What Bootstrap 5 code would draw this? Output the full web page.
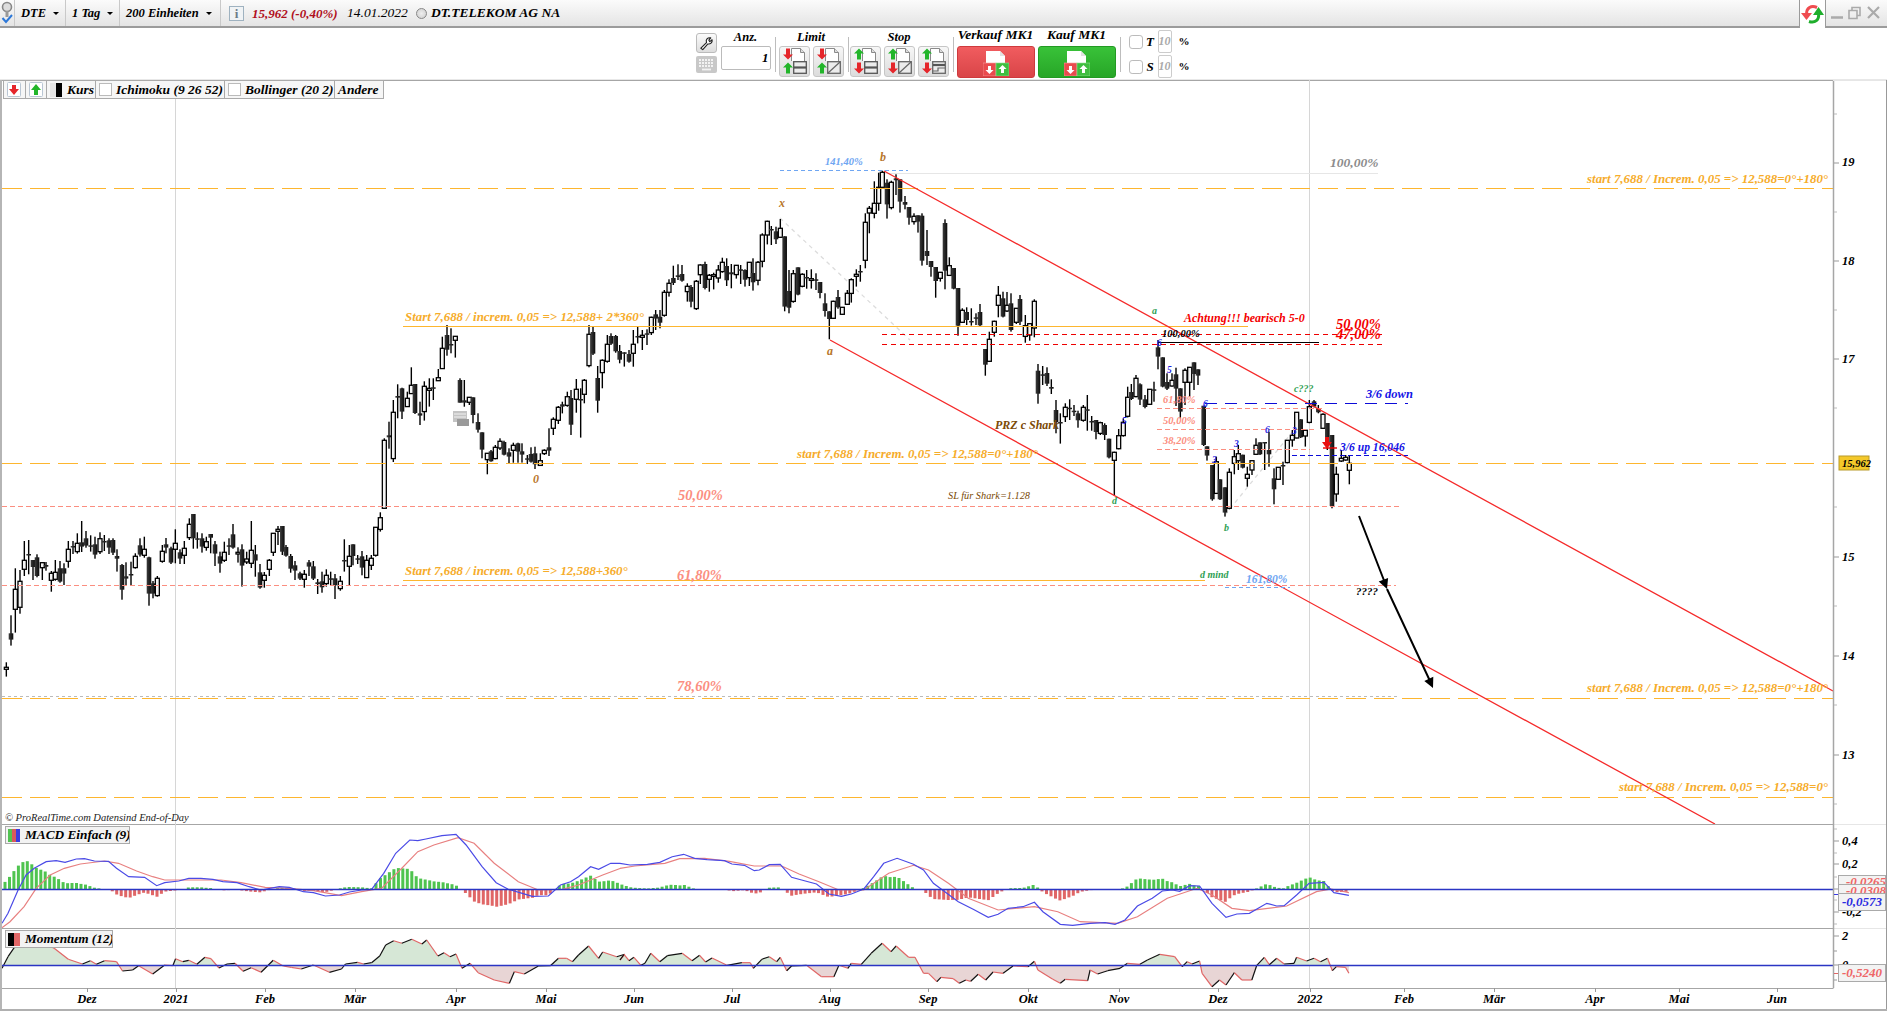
<!DOCTYPE html>
<html lang="de">
<head>
<meta charset="utf-8">
<title>DTE Chart</title>
<link href="https://cdn.jsdelivr.net/npm/bootstrap@5.3.0/dist/css/bootstrap.min.css" rel="stylesheet">
<style>
html,body{height:1011px;overflow:hidden;background:#fff;margin:0}
body,.cur{font-family:"Liberation Serif",serif;font-style:italic;font-weight:700;color:#000;font-size:12.5px;line-height:1}
.top-strip{height:28px;background:linear-gradient(#fbfbfb,#e4e4e4);border-bottom:2px solid #9b9b9b}
.tb-cell{height:26px;border:0;border-right:1px solid #c9c9c9;border-radius:0;padding:0 0 0 6px;font:inherit;color:#000;background:none;text-align:left;white-space:nowrap}
.tb-pin{width:15px;padding:0;display:flex;align-items:center;justify-content:center}
.w-dte{width:51px}.w-day{width:54px}.w-unit{width:101px}
.tb-cell.dropdown-toggle::after{margin-left:7px;vertical-align:.12em;border-top-width:.3em;border-right-width:.28em;border-left-width:.28em}
.info-box{width:15px;height:15px;border:1px solid #9fb2c0;background:#f0f3f5;color:#6c7c88;margin:0 8px;font-size:13px;font-style:normal;text-align:center}
.quote-red{color:#b00f1c;width:95px;font-size:13px}
.quote-date{width:69px;font-size:13.5px;font-weight:400}
.quote-dot{width:11px;height:11px;border-radius:50%;border:1px solid #888;background:radial-gradient(#eee,#ccc)}
.quote-name{font-size:13.5px}
.sync-tab{width:27px;height:28px;background:#fff;border-left:1px solid #9b9b9b;border-right:1px solid #9b9b9b;margin-bottom:-2px;z-index:2}
.win-btns{width:61px;padding-right:6px}
.order-strip{height:52px;padding-right:2px;background:#fff;border-bottom:1px solid #e8e8e8}
.ob-col{display:flex;flex-direction:column;align-items:center}
.ob-label{height:18px;line-height:18px;white-space:nowrap;font-size:12.5px}
.ob-label-mk{font-size:13.5px;line-height:14px}
.ob-sep{width:1px;height:35px;background:#bdbdbd;margin:9px 3px 0 4px}
.ob-sep-tight{margin-right:1px}
.ob-tools{width:21px;margin-right:4px;padding-top:5px;gap:3px}
.tool-btn{width:21px;height:20px;padding:0;border:1px solid #bbb;border-radius:3px;background:linear-gradient(#fbfbfb,#ddd);display:flex;align-items:center;justify-content:center}
.ob-anz{width:50px}
.anz-input{width:50px;height:24px;padding:0 1px 0 0;font:inherit;font-size:13px;text-align:right;border:1px solid #bbb;border-radius:2px;color:#000}
.icon-btn{width:31px;height:31px;padding:0;border:1px solid #c6c6c6;border-radius:3px;background:linear-gradient(#f7f7f7,#dcdcdc);display:flex;align-items:center;justify-content:center}
.mk-btn{width:78px;height:32px;padding:0;border-radius:3px;display:flex;align-items:flex-start;justify-content:center;padding-top:3px}
.mk-sell{background:linear-gradient(#f15c5f,#d94548);border:1px solid #cf3a3d}
.mk-buy{background:linear-gradient(#39c239,#27a627);border:1px solid #239a23}
.ts-wrap{padding:2px 0 0 5px;gap:2px}
.ts-box{width:14px;height:14px;margin:0;border:1px solid #bbb;border-radius:2px}
.ts-input{width:14px;height:23px;padding:0;font:inherit;font-size:12px;color:#aaa;text-align:center;border:1px solid #ccc;border-radius:2px;background:#fff}
.ts-letter{width:15px;text-align:center;font-size:13px}
.ts-pct{font-size:11px;margin-left:7px;font-style:normal}
.chart-frame{border-left:2px solid #b5b5b5;border-right:1px solid #999}
.plot-pane{position:relative}
.plot-pane svg{display:block}
.legend-bar{position:absolute;left:1px;top:0;height:19px;display:flex;background:#f6f6f6;border:1px solid #aaa}
.legend-cell{display:flex;align-items:center;border-right:1px solid #aaa;overflow:hidden;white-space:nowrap;font-size:13.5px;padding-left:3px}
.legend-cell:last-child{border-right:0}
.lc-1{width:22px}.lc-2{width:21px}.lc-3{width:49px}.lc-4{width:129px}.lc-5{width:110px}.lc-6{width:48px}
.lg-swatch{width:13px;height:13px;border:1px solid #bbb;margin-right:4px;flex:none;background:#fff}
.lg-kurs{width:12px;height:14px;background:linear-gradient(90deg,#e6e6e6 0 50%,#000 50%);margin-right:5px;flex:none}
.ind-legend{position:absolute;left:3px;height:18px;background:#f3f3f3;border:1px solid #aaa;display:flex;align-items:center;padding-left:2px;font-size:13.3px;white-space:nowrap;overflow:hidden}
.il-macd{top:2px;width:125px}
.il-mom{top:2px;width:108px}
.macd-swatch{width:12px;height:13px;margin-right:5px;background:linear-gradient(90deg,#52c252 0 33%,#d9595d 33% 66%,#3b3be0 66%);flex:none}
.mom-swatch{width:12px;height:13px;margin-right:5px;background:linear-gradient(90deg,#000 0 50%,#e06666 50%);flex:none}
.bottom-edge{height:2px;background:#b0b0b0}
svg text{font-family:"Liberation Serif",serif;font-style:italic;font-weight:700}
.t-or{fill:#f6ac2b;font-size:12.9px}
.t-fib{fill:#fb8e80;font-size:14.5px}
.t-red{fill:#f40000;font-size:14.5px}
.t-fs{fill:#fb8e80;font-size:10.5px}
.t-bl{fill:#6fa6f2;font-size:10.5px}
.t-bd{fill:#1414e6;font-size:12.5px}
.t-br{fill:#7b4a06;font-size:12px}
.t-gn{fill:#2f9f54;font-size:10px}
.t-mk{fill:#1c1ce0;font-size:9.5px}
.t-ax{fill:#000;font-size:12.5px}
.t-gy{fill:#8c8c8c;font-size:13.5px}
.t-up{font-size:11.6px}
.t-sl{font-size:10.3px;font-weight:400}
.t-wide{font-size:11.5px}
.t-hund{font-size:10.5px}
.t-ach{font-size:12px}
.t-q{font-size:11px}
.t-copy{font-size:10.5px;font-weight:400;fill:#222}
</style>
</head>
<body>
<svg width="0" height="0" class="position-absolute">
  <defs>
    <linearGradient id="cg" x1="0" x2="1" y1="0" y2="0"><stop offset="0" stop-color="#3c3c3c"/><stop offset="1" stop-color="#0c0c0c"/></linearGradient>
    <symbol id="adn" viewBox="0 0 10 11"><path d="M3 0h4v6h3L5 11 0 6h3z" fill="#e5262b"/></symbol>
    <symbol id="aup" viewBox="0 0 10 11"><path d="M5 0l5 5H7v6H3V5H0z" fill="#22b52a"/></symbol>
    <symbol id="doc" viewBox="0 0 14 14"><path d="M.5 13V.5h9l4 4V13" fill="#fff" stroke="#8a8a8a"/><path d="M9.5.5v4h4" fill="#ddd" stroke="#8a8a8a"/></symbol>
    <symbol id="bx1" viewBox="0 0 14 13"><rect x=".7" y=".7" width="12.6" height="11.6" fill="#ececec" stroke="#555" stroke-width="1.3"/><path d="M1 6.5h12" stroke="#555" stroke-width="2.2"/></symbol>
    <symbol id="bx2" viewBox="0 0 14 13"><rect x=".7" y=".7" width="12.6" height="11.6" fill="#ececec" stroke="#666" stroke-width="1.3"/><path d="M1 12L13 1" stroke="#666" stroke-width="1.2"/></symbol>
    <symbol id="bx3" viewBox="0 0 14 13"><rect x=".7" y=".7" width="12.6" height="11.6" fill="#ececec" stroke="#666" stroke-width="1.3"/><path d="M1 4h12" stroke="#555" stroke-width="2.2"/><path d="M1 10h5V7h7" fill="none" stroke="#666" stroke-width="1.2"/></symbol>
    <symbol id="mk" viewBox="0 0 26 26"><path d="M3 14V1h14l5 5v8" fill="#fff"/><path d="M17 1v5h5" fill="#e2e2e2"/><rect y="13" width="13" height="13" fill="#ea4a4e" stroke="#f6a0a0" stroke-width=".6"/><rect x="13" y="13" width="13" height="13" fill="#3fbe3f" stroke="#8fe08f" stroke-width=".6"/><path d="M5 16h3v4h2.500l-4 4-4-4H5z" fill="#fff"/><path d="M19.500 15l4 4H21v4h-3v-4h-2.500z" fill="#fff"/></symbol>
  </defs>
</svg>

<header class="top-strip d-flex align-items-start">
  <div class="tb-cell tb-pin">
    <svg width="13" height="24" viewBox="0 0 13 24"><circle cx="6" cy="6" r="4.500" fill="#ddd" stroke="#888" stroke-width="1.600"/><path d="M6 10v6" stroke="#999" stroke-width="3"/><path d="M1.500 17l3.500 4 6-7" fill="none" stroke="#2d78d8" stroke-width="2"/></svg>
  </div>
  <button class="tb-cell w-dte dropdown-toggle" type="button">DTE</button>
  <button class="tb-cell w-day dropdown-toggle" type="button">1 Tag</button>
  <button class="tb-cell w-unit dropdown-toggle" type="button">200 Einheiten</button>
  <div class="d-flex align-items-center flex-grow-1" style="height:26px">
    <span class="info-box">i</span>
    <span class="quote-red">15,962 (-0,40%)</span>
    <span class="quote-date">14.01.2022</span>
    <span class="quote-dot"></span>
    <span class="quote-name ms-1">DT.TELEKOM AG NA</span>
  </div>
  <div class="sync-tab d-flex align-items-center justify-content-center">
    <svg width="23" height="21" viewBox="0 0 23 21"><path d="M16 3.500C10 1 5.500 4 5.500 10" fill="none" stroke="#ef4c50" stroke-width="3"/><path d="M0 9h11l-5.500 7z" fill="#ef4c50"/><path d="M8 17.500c6 2 10.500-1.500 9.500-8" fill="none" stroke="#1fae2c" stroke-width="3"/><path d="M12 11h11l-5.500-8z" fill="#1fae2c"/></svg>
  </div>
  <div class="win-btns d-flex align-items-center justify-content-end" style="height:26px">
    <svg width="50" height="14" viewBox="0 0 50 14"><path d="M0 11.500h12" stroke="#aaa" stroke-width="2.500"/><path d="M18 4.500h8v8h-8zM21 4.500v-3h8v8h-3" fill="none" stroke="#aaa" stroke-width="1.600"/><path d="M37 1l11 11M48 1L37 12" stroke="#aaa" stroke-width="2.200"/></svg>
  </div>
</header>

<section class="order-strip d-flex justify-content-center align-items-start">
  <div class="ob-col ob-tools">
    <button class="tool-btn" type="button" aria-label="Werkzeug"><svg width="15" height="15" viewBox="0 0 16 16"><path d="M2 13L8 7C7 4 9 1.500 12.500 2L10.500 4.500 11.500 6 14 4C14.500 7 12 9 9.500 8.500L4 14.500Z" fill="#fff" stroke="#222" stroke-width="1.200" stroke-linejoin="round"/></svg></button>
    <svg width="21" height="17" viewBox="0 0 21 17"><rect width="21" height="17" rx="2" fill="#c8c8c8"/><path d="M3 4h15M3 7h15M3 10h15" stroke="#f2f2f2" stroke-width="1.800" stroke-dasharray="2 1"/><path d="M6 13.500h9" stroke="#f2f2f2" stroke-width="1.800"/></svg>
  </div>
  <div class="ob-col ob-anz"><span class="ob-label">Anz.</span><input class="form-control anz-input" value="1" aria-label="Anzahl"></div>
  <span class="ob-sep"></span>
  <div class="ob-col"><span class="ob-label">Limit</span>
    <div class="d-flex" style="gap:3px">
      <button class="icon-btn" type="button" aria-label="Limit 1"><svg width="28" height="27" viewBox="0 0 28 27"><use href="#doc" x="11" y="0" width="14" height="14"/><use href="#adn" x="3" y="0" width="10" height="12"/><use href="#aup" x="3" y="14" width="10" height="12"/><use href="#bx1" x="13" y="13" width="14" height="13"/></svg></button>
      <button class="icon-btn" type="button" aria-label="Limit 2"><svg width="28" height="27" viewBox="0 0 28 27"><use href="#doc" x="11" y="0" width="14" height="14"/><use href="#adn" x="3" y="0" width="10" height="12"/><use href="#aup" x="3" y="14" width="10" height="12"/><use href="#bx2" x="13" y="13" width="14" height="13"/></svg></button>
    </div>
  </div>
  <span class="ob-sep ob-sep-tight"></span>
  <div class="ob-col"><span class="ob-label">Stop</span>
    <div class="d-flex" style="gap:3px">
      <button class="icon-btn" type="button" aria-label="Stop 1"><svg width="28" height="27" viewBox="0 0 28 27"><use href="#doc" x="11" y="0" width="14" height="14"/><use href="#aup" x="3" y="0" width="10" height="12"/><use href="#adn" x="3" y="14" width="10" height="12"/><use href="#bx1" x="13" y="13" width="14" height="13"/></svg></button>
      <button class="icon-btn" type="button" aria-label="Stop 2"><svg width="28" height="27" viewBox="0 0 28 27"><use href="#doc" x="11" y="0" width="14" height="14"/><use href="#aup" x="3" y="0" width="10" height="12"/><use href="#adn" x="3" y="14" width="10" height="12"/><use href="#bx2" x="13" y="13" width="14" height="13"/></svg></button>
      <button class="icon-btn" type="button" aria-label="Stop 3"><svg width="28" height="27" viewBox="0 0 28 27"><use href="#doc" x="11" y="0" width="14" height="14"/><use href="#aup" x="3" y="0" width="10" height="12"/><use href="#adn" x="3" y="14" width="10" height="12"/><use href="#bx3" x="13" y="13" width="14" height="13"/></svg></button>
    </div>
  </div>
  <span class="ob-sep"></span>
  <div class="d-flex" style="gap:3px">
    <div class="ob-col"><span class="ob-label ob-label-mk">Verkauf MK1</span><button class="mk-btn mk-sell" type="button" aria-label="Verkauf"><svg width="26" height="26"><use href="#mk" width="26" height="26"/></svg></button></div>
    <div class="ob-col"><span class="ob-label ob-label-mk">Kauf MK1</span><button class="mk-btn mk-buy" type="button" aria-label="Kauf"><svg width="26" height="26"><use href="#mk" width="26" height="26"/></svg></button></div>
  </div>
  <span class="ob-sep"></span>
  <div class="d-flex flex-column ts-wrap">
    <div class="d-flex align-items-center"><input class="form-check-input ts-box" type="checkbox" aria-label="T"><span class="ts-letter">T</span><input class="ts-input" value="10" aria-label="T Prozent"><span class="ts-pct">%</span></div>
    <div class="d-flex align-items-center"><input class="form-check-input ts-box" type="checkbox" aria-label="S"><span class="ts-letter">S</span><input class="ts-input" value="10" aria-label="S Prozent"><span class="ts-pct">%</span></div>
  </div>
</section>

<main class="chart-frame">
  <div class="plot-pane">
    <svg id="pricePane" width="1884" height="744" viewBox="2 80 1884 744">
      <path d="M2 80.500H1833" stroke="#a6a6a6"/>
      <path d="M175.500 80V824M1309.500 80V824" stroke="#d6d6d6"/>
      <path d="M780 218L910 340M1225 515L1302 420" stroke="#dcdcdc" stroke-width="1.300" stroke-dasharray="4 4" fill="none"/>
      <g id="candles"></g>
      <path d="M2 188.500H1833M2 463.500H1833M2 698.500H1833M2 797.500H1833" stroke="#fdb62f" stroke-width="1" stroke-dasharray="20 8" fill="none"/>
      <path d="M403 326.500H1248M403 580.500H1205" stroke="#fdb62f" stroke-width="1" fill="none"/>
      <path d="M885 173.500H1378" stroke="#e6e6e6"/>
      <path d="M2 506.500H1400M2 585.500H1396" stroke="#fb8e80" stroke-width="1" stroke-dasharray="5 3" fill="none"/>
      <path d="M2 696.500H1400" stroke="#bbb" stroke-width="1" stroke-dasharray="3 3" fill="none"/>
      <path d="M1157 408.500H1325M1157 429.500H1315M1157 449.500H1310" stroke="#fb8e80" stroke-width="1" stroke-dasharray="5 3" fill="none"/>
      <path d="M884 171L1833 691M830 340L1715 824" stroke="#f52a2a" stroke-width="1.300" fill="none"/>
      <path d="M882 334.500H1382M882 344.500H1382" stroke="#ee0000" stroke-width="1" stroke-dasharray="5 4" fill="none"/>
      <path d="M1158 342.500H1319" stroke="#000" stroke-width="1"/>
      <path d="M1205 403.500H1408" stroke="#0c0cd8" stroke-width="1" stroke-dasharray="12 8" fill="none"/>
      <path d="M1292 455.500H1408" stroke="#0c0cd8" stroke-width="1" stroke-dasharray="5 3" fill="none"/>
      <path d="M780 170.500H908M1225 587.500H1290" stroke="#6fa6f2" stroke-width="1" stroke-dasharray="4 3" fill="none"/>
      <path d="M1323 448H1337" stroke="#ee0000" stroke-width="1.400"/>
      <path d="M1325 437h4v5h3l-5 7-5-7h3z" fill="#e81010"/>
      <path d="M1359 516L1385 583M1387 589L1430 681" stroke="#000" stroke-width="2" fill="none"/>
      <path d="M1387 589L1388.100 577.900 1378.700 581.500ZM1433 688L1433.300 676.800 1424.300 681Z" fill="#000"/>
      <g fill="#c4c4c4"><rect x="453" y="411" width="14" height="11"/><rect x="457" y="419" width="12" height="7" fill="#9a9a9a"/></g>
      <path d="M454 414h12M454 417h12" stroke="#f2f2f2"/>
      <text class="t-or" text-anchor="end" x="1828" y="183">start 7,688 / Increm. 0,05 =&gt; 12,588=0°+180°</text>
      <text class="t-or" text-anchor="end" x="1828" y="692">start 7,688 / Increm. 0,05 =&gt; 12,588=0°+180°</text>
      <text class="t-or" text-anchor="end" x="1828" y="791">start 7,688 / Increm. 0,05 =&gt; 12,588=0°</text>
      <text class="t-or" x="797" y="458">start 7,688 / Increm. 0,05 =&gt; 12,588=0°+180°</text>
      <text class="t-or" x="405" y="321">Start 7,688 / increm. 0,05 =&gt; 12,588+ 2*360°</text>
      <text class="t-or" x="405" y="575">Start 7,688 / increm. 0,05 =&gt; 12,588+360°</text>
      <text class="t-fib" x="678" y="500">50,00%</text>
      <text class="t-fib" x="677" y="580">61,80%</text>
      <text class="t-fib" x="677" y="691">78,60%</text>
      <text class="t-gy" x="1330" y="167">100,00%</text>
      <text class="t-bl" x="825" y="165">141,40%</text>
      <text class="t-br" x="880" y="161" style="fill:#b8762a">b</text>
      <text class="t-br" x="779" y="207" style="fill:#b8762a">x</text>
      <text class="t-br" x="827" y="355" style="fill:#b8762a">a</text>
      <text class="t-br" x="533" y="483" style="fill:#b8762a">0</text>
      <text class="t-gn" x="1152" y="314">a</text>
      <text class="t-gn" x="1112" y="504">d</text>
      <text class="t-gn" x="1224" y="531">b</text>
      <text class="t-gn" x="1294" y="392">c???</text>
      <text class="t-gn" x="1200" y="578">d mind</text>
      <text class="t-red t-ach" x="1184" y="322">Achtung!!! bearisch 5-0</text>
      <text class="t-red" x="1336" y="329">50,00%</text>
      <text class="t-red" x="1336" y="339">47,00%</text>
      <text class="t-hund" x="1162" y="337">100,00%</text>
      <text class="t-fs" x="1163" y="403">61,80%</text>
      <text class="t-fs" x="1163" y="424">50,00%</text>
      <text class="t-fs" x="1163" y="444">38,20%</text>
      <text class="t-bd" x="1366" y="398">3/6 down</text>
      <text class="t-bd t-up" x="1340" y="451">3/6 up 16,046</text>
      <text class="t-bl t-wide" x="1246" y="583">161,80%</text>
      <text class="t-q" x="1356" y="595">????</text>
      <text class="t-br" x="995" y="429">PRZ c Shark</text>
      <text class="t-br t-sl" x="948" y="499">SL für Shark=1.128</text>
      <g class="marks">
        <text class="t-mk" x="1157" y="346">6</text><text class="t-mk" x="1167" y="373">5</text><text class="t-mk" x="1203" y="407">6</text><text class="t-mk" x="1212" y="463">3</text><text class="t-mk" x="1122" y="424">5</text><text class="t-mk" x="1234" y="447">3</text><text class="t-mk" x="1265" y="433">6</text><text class="t-mk" x="1292" y="434">3</text>
      </g>
      <text class="t-copy" x="5" y="821">© ProRealTime.com  Datensind End-of-Day</text>
      <path d="M1833.500 80V824" stroke="#a6a6a6" stroke-width="1.500"/>
      <path d="M1833 80.500H1886" stroke="#e6e6e6"/>
      <path d="M1834 163h5M1834 261h5M1834 359h5M1834 557h5M1834 656h5M1834 755h5" stroke="#999"/>
      <path d="M1834 212h3M1834 310h3M1834 408h3M1834 507h3M1834 606h3M1834 705h3M1834 804h3M1834 114h3" stroke="#bbb"/>
      <text class="t-ax" x="1842" y="166">19</text><text class="t-ax" x="1842" y="265">18</text><text class="t-ax" x="1842" y="363">17</text>
      <text class="t-ax" x="1842" y="561">15</text><text class="t-ax" x="1842" y="660">14</text><text class="t-ax" x="1842" y="759">13</text>
      <rect x="1839" y="456" width="30" height="14" fill="#f4c82a" stroke="#b89a2a"/>
      <text class="t-hund" x="1842" y="467">15,962</text>
    </svg>
    <div class="legend-bar">
      <div class="legend-cell lc-1"><svg width="14" height="15" viewBox="0 0 14 15"><rect x=".5" y=".5" width="13" height="14" rx="1" fill="#fff" stroke="#b9c6d4"/><path d="M5 3h4v4h3l-5 6-5-6h3z" fill="#e5262b"/></svg></div>
      <div class="legend-cell lc-2"><svg width="14" height="15" viewBox="0 0 14 15"><rect x=".5" y=".5" width="13" height="14" rx="1" fill="#fff" stroke="#b9c6d4"/><path d="M7 2l5 6H9v5H5V8H2z" fill="#22b52a"/></svg></div>
      <div class="legend-cell lc-3"><span class="lg-kurs"></span>Kurs</div>
      <div class="legend-cell lc-4"><span class="lg-swatch"></span>Ichimoku (9 26 52)</div>
      <div class="legend-cell lc-5"><span class="lg-swatch"></span>Bollinger (20 2)</div>
      <div class="legend-cell lc-6">Andere</div>
    </div>
  </div>
  <div class="plot-pane">
    <svg id="macdPane" width="1884" height="104" viewBox="2 824 1884 104">
      <path d="M2 824.500H1833" stroke="#a6a6a6" stroke-width="1.200"/><path d="M1833 824.500H1886" stroke="#e6e6e6"/>
      <path d="M175.500 824V928M1309.500 824V928" stroke="#d6d6d6"/>
      <g id="macdPlot"></g>
      <path d="M2 889.500H1833" stroke="#2b35c4" stroke-width="1.300"/>
      <path d="M1833.500 824V928" stroke="#a6a6a6" stroke-width="1.500"/>
      <path d="M1834 841h5M1834 864h5M1834 889h5M1834 912h5" stroke="#999"/><path d="M1834 829h3M1834 853h3M1834 877h3M1834 900h3M1834 924h3" stroke="#bbb"/>
      <text class="t-ax" x="1842" y="845">0,4</text><text class="t-ax" x="1842" y="868">0,2</text><text class="t-ax" x="1842" y="916">-0,2</text>
      <rect x="1838.500" y="875.500" width="47" height="13" fill="#f3f3f3" stroke="#aaa"/><text x="1846" y="886" style="font-size:13px;fill:#e66">-0,0265</text>
      <rect x="1838.500" y="884.500" width="47" height="13" fill="#f3f3f3" stroke="#aaa"/><text x="1846" y="895" style="font-size:13px;fill:#e66">-0,0308</text>
      <path d="M1834 894.500h4" stroke="#3a3ae0"/>
      <rect x="1838.500" y="893.500" width="47" height="17" fill="#f3f3f3" stroke="#aaa"/><text x="1842" y="906" style="font-size:13px;fill:#2c2ce0">-0,0573</text>
    </svg>
    <div class="ind-legend il-macd"><span class="macd-swatch"></span>MACD Einfach (9)</div>
  </div>
  <div class="plot-pane">
    <svg id="momPane" width="1884" height="60" viewBox="2 928 1884 60">
      <path d="M2 928.500H1833" stroke="#a6a6a6" stroke-width="1.200"/><path d="M1833 928.500H1886" stroke="#e6e6e6"/>
      <path d="M175.500 928V988M1309.500 928V988" stroke="#d6d6d6"/>
      <g id="momPlot"></g>
      <path d="M2 965.500H1833" stroke="#2b35c4" stroke-width="1.300"/>
      <path d="M1833.500 928V988" stroke="#a6a6a6" stroke-width="1.500"/>
      <path d="M1834 936h5M1834 965h5M1834 951h3M1834 980h3" stroke="#999"/><path d="M1834 973.500h4" stroke="#e06666"/>
      <text class="t-ax" x="1842" y="940">2</text><text class="t-ax" x="1842" y="969">0</text>
      <rect x="1838.500" y="964.500" width="47" height="17" fill="#f3f3f3" stroke="#aaa"/><text x="1842" y="977" style="font-size:13px;fill:#e66">-0,5240</text>
    </svg>
    <div class="ind-legend il-mom"><span class="mom-swatch"></span>Momentum (12)</div>
  </div>
  <svg id="timeAxis" class="d-block" width="1884" height="21" viewBox="2 988 1884 21">
    <path d="M2 988.500H1833.500" stroke="#a6a6a6" stroke-width="1.200"/>
    <g id="timeLabels"></g>
  </svg>
</main>
<div class="bottom-edge"></div>

<script>
(function(){
var NS='http://www.w3.org/2000/svg';
function el(parent,tag,attrs,txt){var e=document.createElementNS(NS,tag);for(var k in attrs)e.setAttribute(k,attrs[k]);if(txt!=null)e.textContent=txt;parent.appendChild(e);return e;}

var segs=[
{x:0,y:490,d:"19 w 532 538 517 560|33 b 430 449 376 467|46 w 298 358 235 428|60 w 274 352 240 371|73 w 211 238 153 258|86 b 192 195 150 253|99 b 210 231 210 270|111 b 202 258 193 262|127 w 218 233 218 270|138 b 225 230 216 242|154 w 250 271 243 305|166 w 247 268 210 272|180 b 235 275 213 278|192 b 235 251 220 285|205 w 178 214 153 233|219 b 168 171 153 192|232 w 160 185 130 191|245 b 157 170 93 186|258 b 145 167 123 173|272 b 166 170 136 185|285 b 163 194 140 206|300 w 146 185 127 192|313 b 153 155 135 183|327 b 151 173 145 192|339 b 150 188 145 195|351 b 198 206 178 245|366 b 225 299 222 329|378 b 259 266 217 288|393 b 252 254 215 286|406 w 199 233 190 236|420 b 166 194 145 200|433 w 178 196 140 203|447 b 202 311 200 347|459 b 280 311 273 325|472 w 265 317 258 320|487 w 184 214 165 218|498 b 163 173 144 190|513 b 175 218 170 222|526 w 160 178 118 220|540 b 187 206 178 222|553 w 175 196 153 222|568 w 103 143 85 150|580 b 72 145 72 176|592 b 145 149 127 176|606 b 145 170 130 188|619 w 155 172 140 182|632 b 132 143 132 190|645 b 163 191 153 228|660 b 199 221 185 248|673 w 187 211 155 216|687 b 166 170 145 195|699 b 133 173 102 176|714 w 187 192 172 218|726 b 178 227 163 290|740 w 207 216 185 222|754 w 181 220 93 234|766 b 193 212 165 260|780 b 247 293 222 296|793 w 256 271 246 293|808 w 211 238 207 258|820 w 130 187 130 198|834 w 118 124 108 165|847 b 108 185 108 195|858 b 171 197 165 200|872 b 198 236 192 248|885 b 226 242 213 270|900 b 250 266 245 270|913 w 253 268 240 293|927 b 217 230 210 258|940 b 229 266 213 270|953 b 277 282 267 312|966 b 274 292 245 308|979 w 256 281 238 290|992 b 265 268 245 285|1005 b 265 286 252 327|1021 w 274 296 258 302|1033 b 210 213 148 245|1048 w 199 229 165 285|1059 b 163 198 163 226|1073 b 205 209 195 222|1086 b 199 233 183 256|1100 w 211 263 195 263|1114 w 205 226 195 240|1127 w 112 196 112 200|1141 w 83 118 67 125"},
{x:380,y:290,d:"13 w 451 655 445 655|27 b 436 442 395 476|40 w 367 506 330 516|53 b 318 323 283 385|66 b 295 365 293 387|82 w 325 350 305 350|94 w 286 311 232 311|105 b 282 369 282 372|120 b 370 377 335 405|133 w 289 365 274 392|148 w 295 301 265 350|160 b 292 294 265 330|175 w 263 272 237 272|187 w 175 236 140 237|201 b 135 179 105 197|213 b 162 164 115 190|226 w 139 151 139 203|240 b 270 338 265 338|253 b 331 338 270 350|268 w 322 337 322 345|279 b 322 375 322 400|294 b 396 419 370 428|306 b 427 479 427 505|322 w 490 509 490 553|333 b 484 514 480 515|346 w 472 506 465 508|360 w 454 474 445 480|372 b 456 494 452 496|387 b 487 500 475 520|400 w 466 481 458 518|414 b 460 485 458 518|426 b 484 494 460 518|442 b 505 509 495 522|453 b 492 515 472 518|465 b 490 523 470 537|481 w 512 526 490 526|493 w 481 491 478 495|507 b 472 482 415 498|520 w 388 415 382 435|535 w 352 391 348 402|547 b 343 350 335 370|562 w 320 346 305 350|573 b 324 404 300 435|589 w 298 328 267 368|602 b 327 329 295 443|613 w 271 313 267 340|627 w 133 227 105 232|639 b 126 191 110 195|653 b 264 332 228 368|667 w 211 248 208 295|682 w 163 214 135 218|693 b 138 161 130 165|707 b 138 184 135 188|719 b 183 209 165 220|733 b 187 189 187 230|747 b 192 215 180 218|760 w 163 190 120 230|773 b 138 141 110 160|787 w 136 142 120 180|801 b 130 133 118 165|814 w 82 128 80 135|827 b 73 86 60 120|840 b 80 98 60 115|853 w 7 76 0 80"},
{x:560,y:200,d:"327 w 250 277 238 290|340 b 234 249 197 255|354 b 226 231 193 240|366 b 222 242 195 245|382 w 259 275 250 305|393 b 261 305 255 322|409 w 244 326 240 330|421 w 195 224 193 252|435 b 192 264 185 268|448 w 226 238 222 275|461 w 224 229 218 268|475 w 210 234 195 248|487 w 187 215 173 218|500 b 198 241 175 258|514 b 217 223 192 265|529 w 196 224 196 236|542 b 208 210 195 252|555 b 210 239 208 260|568 w 187 233 187 258|579 b 219 247 175 272|594 w 187 241 183 256"},
{x:750,y:150,d:"37 w 255 334 250 352|52 w 214 255 212 283|64 b 237 241 228 285|78 b 244 268 230 282|91 w 235 262 207 264|104 b 259 470 259 484|117 b 423 473 360 490|130 w 371 454 360 458|144 b 352 434 352 436|157 w 373 409 370 412|170 b 381 385 360 416|184 w 386 391 358 416|198 b 388 391 370 420|210 b 396 429 396 445|225 b 460 483 430 500|238 b 484 507 484 568|250 w 454 505 452 507|264 b 441 472 420 476|277 w 472 493 472 495|292 w 430 463 420 465|304 w 389 430 385 458|319 w 373 379 358 410|331 b 363 365 345 395|346 w 217 331 190 355|358 w 175 189 168 250|373 w 160 190 94 205|386 w 112 160 68 182|397 w 67 112 62 112|411 b 98 163 88 206|424 w 97 173 92 178|438 b 85 91 73 135|450 b 88 155 88 188|465 b 156 164 138 178|477 b 171 203 171 224|492 w 199 215 190 224|504 b 196 215 196 248|516 b 197 332 190 347|531 b 303 318 240 345|543 b 333 351 333 380|557 b 351 393 351 443|571 w 367 385 367 395|585 b 219 362 208 418|598 w 347 376 322 376|611 b 354 416 354 418|624 b 414 527 414 557|637 w 481 517 475 519|650 b 486 510 472 525|664 b 513 515 475 527|678 b 502 505 490 525|690 b 486 526 462 528|706 b 597 644 597 677|718 w 568 634 545 636|733 w 514 547 512 560|745 w 436 466 408 502|759 b 445 500 425 502|771 w 466 483 426 486|783 b 460 540 430 545|799 w 475 517 475 522|810 b 447 515 435 525|826 w 527 559 495 578|839 w 521 555 521 572|853 w 454 534 448 562"},
{x:980,y:340,d:"174 b 92 161 72 191|188 b 103 106 78 135|201 b 99 131 82 138|214 b 141 146 118 162|228 b 210 247 180 280|241 b 246 249 220 311|256 w 202 230 190 246|269 b 203 206 178 240|282 b 212 215 195 228|294 b 220 241 212 263|310 w 202 241 195 245|322 b 208 211 165 272|335 b 243 247 228 272|348 b 240 276 240 298|361 w 248 280 245 285|374 b 255 285 250 300|387 b 296 352 296 355|403 w 337 361 335 466|416 w 287 326 267 328|430 w 247 287 235 290|443 w 172 229 140 232|454 b 156 177 132 180|468 w 115 170 105 172|480 b 133 179 130 195|495 b 178 201 165 205|509 w 148 193 148 195|522 b 148 150 125 185"},
{x:1100,y:290,d:"174 b 172 200 150 238|188 b 202 290 202 292|201 b 276 296 250 300|216 w 271 288 250 290|228 b 253 296 233 348|241 b 295 365 295 385|255 w 241 277 235 345|269 w 232 277 232 320|282 b 217 252 217 300|294 b 238 257 238 285|311 b 347 465 347 468|321 b 469 497 469 512|337 b 525 628 525 632|349 w 515 610 500 612|360 b 568 628 568 630|375 b 592 668 592 680|388 w 547 655 535 658|403 w 500 520 480 553|415 w 491 512 465 540|428 b 494 533 494 535|442 w 553 565 530 590|456 w 512 540 512 555|468 w 466 493 445 495|480 b 457 493 457 495|494 b 456 460 456 540|507 b 480 493 425 530|522 b 565 598 535 643|535 w 532 568 532 570|549 b 525 528 515 585|562 w 451 518 451 520|577 w 436 450 420 470|590 w 367 444 367 445|602 b 388 442 388 444|616 w 421 438 421 470|628 w 350 397 330 400|642 b 334 350 330 352|655 b 355 367 345 370|669 w 373 415 370 417|682 b 399 465 399 480|696 b 435 648 435 655|709 w 553 612 530 635|724 w 505 513 480 516|737 w 502 510 495 512|748 w 520 541 495 583"}
];
var g=document.getElementById('candles');
segs.forEach(function(s){
  s.d.split('|').forEach(function(r){
    var p=r.split(' '),X=s.x+(+p[0])/3,T=s.y+(+p[2])/3,B=s.y+(+p[3])/3,H=s.y+(+p[4])/3,L=s.y+(+p[5])/3;
    el(g,'rect',{x:(X-.7).toFixed(2),y:H.toFixed(1),width:1.4,height:(L-H).toFixed(1),fill:'#000'});
    if(p[1]==='w') el(g,'rect',{x:(X-2).toFixed(2),y:T.toFixed(1),width:4,height:Math.max(B-T,1).toFixed(1),fill:'#f5f5f5',stroke:'#000','stroke-width':1.3});
    else el(g,'rect',{x:(X-2.3).toFixed(2),y:T.toFixed(1),width:4.6,height:Math.max(B-T,1.5).toFixed(1),fill:'url(#cg)'});
  });
});

function toPts(a,b){
  var out=[];
  for(var i=0;i<a.length;i+=2){var x=a[i]/2.489;if(x<628)out.push([x,800+a[i+1]/3]);}
  for(i=0;i<b.length;i+=2){out.push([620+b[i]/2.01,820+b[i+1]/3]);}
  return out;
}
var blue=toPts([5,370,20,340,45,270,65,225,85,205,115,185,140,182,162,187,190,177,210,176,235,183,270,184,290,205,320,230,360,232,390,257,410,248,445,243,470,235,500,235,530,238,555,245,590,248,620,260,650,270,695,260,720,262,755,275,780,278,810,288,845,285,870,276,900,270,925,268,955,220,985,160,1020,120,1040,122,1060,117,1100,107,1135,103,1160,135,1200,200,1235,248,1265,268,1300,280,1325,289,1365,288,1395,255,1420,245,1440,230,1470,200,1490,208,1520,190,1545,190],
[0,130,20,135,55,133,80,127,105,110,128,103,150,115,175,119,210,122,225,132,250,136,270,152,280,150,300,134,322,133,345,172,365,180,395,192,420,222,445,229,465,222,490,207,510,170,530,130,557,115,590,133,610,150,630,190,680,245,710,268,740,292,760,283,780,265,810,260,833,247,850,275,885,313,910,316,945,310,975,308,995,313,1015,300,1040,258,1070,235,1090,213,1110,210,1125,214,1145,197,1165,198,1190,250,1218,292,1240,282,1265,280,1300,250,1320,258,1335,257,1360,225,1385,190,1415,187,1435,218,1465,226]);
var red=toPts([5,383,25,365,60,320,90,265,125,225,160,205,200,192,260,183,295,190,340,213,380,230,410,240,470,240,550,240,600,248,660,262,720,265,780,272,850,287,900,275,950,265,1000,205,1040,155,1080,135,1140,113,1180,130,1230,190,1290,245,1340,270,1400,268,1440,255,1500,225,1545,205],
[0,145,30,138,90,130,120,116,170,115,220,124,270,138,325,138,360,162,400,185,440,210,490,210,540,160,590,136,620,150,660,190,700,235,760,270,833,260,880,275,925,305,1000,310,1040,290,1100,235,1160,205,1190,225,1230,265,1265,272,1340,258,1400,215,1430,207,1465,218]);
function at(pts,x){
  if(x<=pts[0][0])return pts[0][1];
  for(var i=1;i<pts.length;i++)if(x<=pts[i][0]){var a=pts[i-1],b=pts[i];return a[1]+(b[1]-a[1])*(x-a[0])/(b[0]-a[0]);}
  return pts[pts.length-1][1];
}
function pathOf(pts){return 'M'+pts.map(function(p){return p[0].toFixed(1)+' '+p[1].toFixed(1);}).join('L');}
var m=document.getElementById('macdPlot'),zero=889;
for(var x=5;x<1350;x+=4.47){
  var h=at(red,x)-at(blue,x);
  if(Math.abs(h)<.5)continue;
  var bh=Math.min(Math.abs(h),36);
  el(m,'rect',{x:(x-1.5).toFixed(1),y:(h>0?zero-bh:zero).toFixed(1),width:3,height:bh.toFixed(1),fill:h>0?'#4fc44f':'#e06666'});
}
el(m,'path',{d:pathOf(red),fill:'none',stroke:'#e88080','stroke-width':1.2});
el(m,'path',{d:pathOf(blue),fill:'none',stroke:'#4a4ae6','stroke-width':1.2});

var mom=toPts([5,505,20,470,37,440,60,432,90,430,110,432,135,445,170,478,205,492,225,482,240,493,260,482,290,485,305,513,330,510,345,497,380,522,410,495,430,497,437,476,455,485,470,481,490,493,510,472,525,476,545,504,565,492,585,490,605,514,625,503,650,517,680,481,705,498,725,502,750,507,780,495,820,517,850,507,860,492,890,487,905,492,925,488,945,468,960,435,980,422,1000,430,1025,418,1050,432,1062,420,1090,468,1105,458,1120,470,1135,462,1150,505,1170,490,1190,518,1230,540,1268,550,1280,515,1305,522,1340,498,1370,497,1390,475,1410,475,1425,485,1440,465,1465,438,1490,475,1500,456,1535,470,1555,463],
[0,420,8,403,18,422,28,412,42,436,50,430,62,400,80,425,95,407,125,400,145,422,160,406,172,426,185,414,215,436,245,428,262,428,268,445,285,418,300,410,315,425,322,412,335,452,345,438,375,436,405,470,430,470,440,436,458,445,465,430,485,433,505,400,527,370,545,395,555,378,580,412,593,412,610,460,620,460,637,485,645,472,670,476,682,490,695,480,705,484,720,463,735,480,750,456,770,460,790,438,820,440,833,424,840,450,870,478,885,490,895,478,940,482,945,450,960,462,980,452,1005,445,1020,430,1045,433,1060,420,1085,403,1115,410,1130,440,1140,425,1150,432,1165,423,1170,460,1190,500,1205,480,1218,495,1235,458,1250,480,1270,480,1280,436,1295,412,1305,434,1320,415,1335,432,1355,430,1360,412,1380,423,1395,415,1408,425,1422,415,1432,452,1440,440,1458,442,1465,460]);
var q=document.getElementById('momPlot'),mz=965.3,svg=document.getElementById('momPane');
var defs=el(svg,'defs',{});
var c1=el(defs,'clipPath',{id:'clipUp'});el(c1,'rect',{x:0,y:928,width:1400,height:mz-928});
var c2=el(defs,'clipPath',{id:'clipDn'});el(c2,'rect',{x:0,y:mz,width:1400,height:60});
var area=pathOf(mom)+'L'+mom[mom.length-1][0].toFixed(1)+' '+mz+'L'+mom[0][0].toFixed(1)+' '+mz+'Z';
el(q,'path',{d:area,fill:'#d6e7d6','clip-path':'url(#clipUp)'});
el(q,'path',{d:area,fill:'#e8d5d5','clip-path':'url(#clipDn)'});
for(var i=1;i<mom.length;i++){
  el(q,'line',{x1:mom[i-1][0].toFixed(1),y1:mom[i-1][1].toFixed(1),x2:mom[i][0].toFixed(1),y2:mom[i][1].toFixed(1),stroke:mom[i][1]<mom[i-1][1]?'#111':'#e06666','stroke-width':1.2});
}

var t=document.getElementById('timeLabels');
[['Dez',87],['2021',176],['Feb',265],['Mär',355],['Apr',456],['Mai',546],['Jun',634],['Jul',732],['Aug',830],['Sep',928],['Okt',1028],['Nov',1119],['Dez',1218],['2022',1310],['Feb',1404],['Mär',1494],['Apr',1595],['Mai',1679],['Jun',1777]].forEach(function(a){
  el(t,'path',{d:'M'+a[1]+'.5 988v4',stroke:'#999'});
  el(t,'text',{x:a[1],y:1003,'text-anchor':'middle',class:'t-ax'},a[0]);
});
})();
</script>
</body>
</html>
